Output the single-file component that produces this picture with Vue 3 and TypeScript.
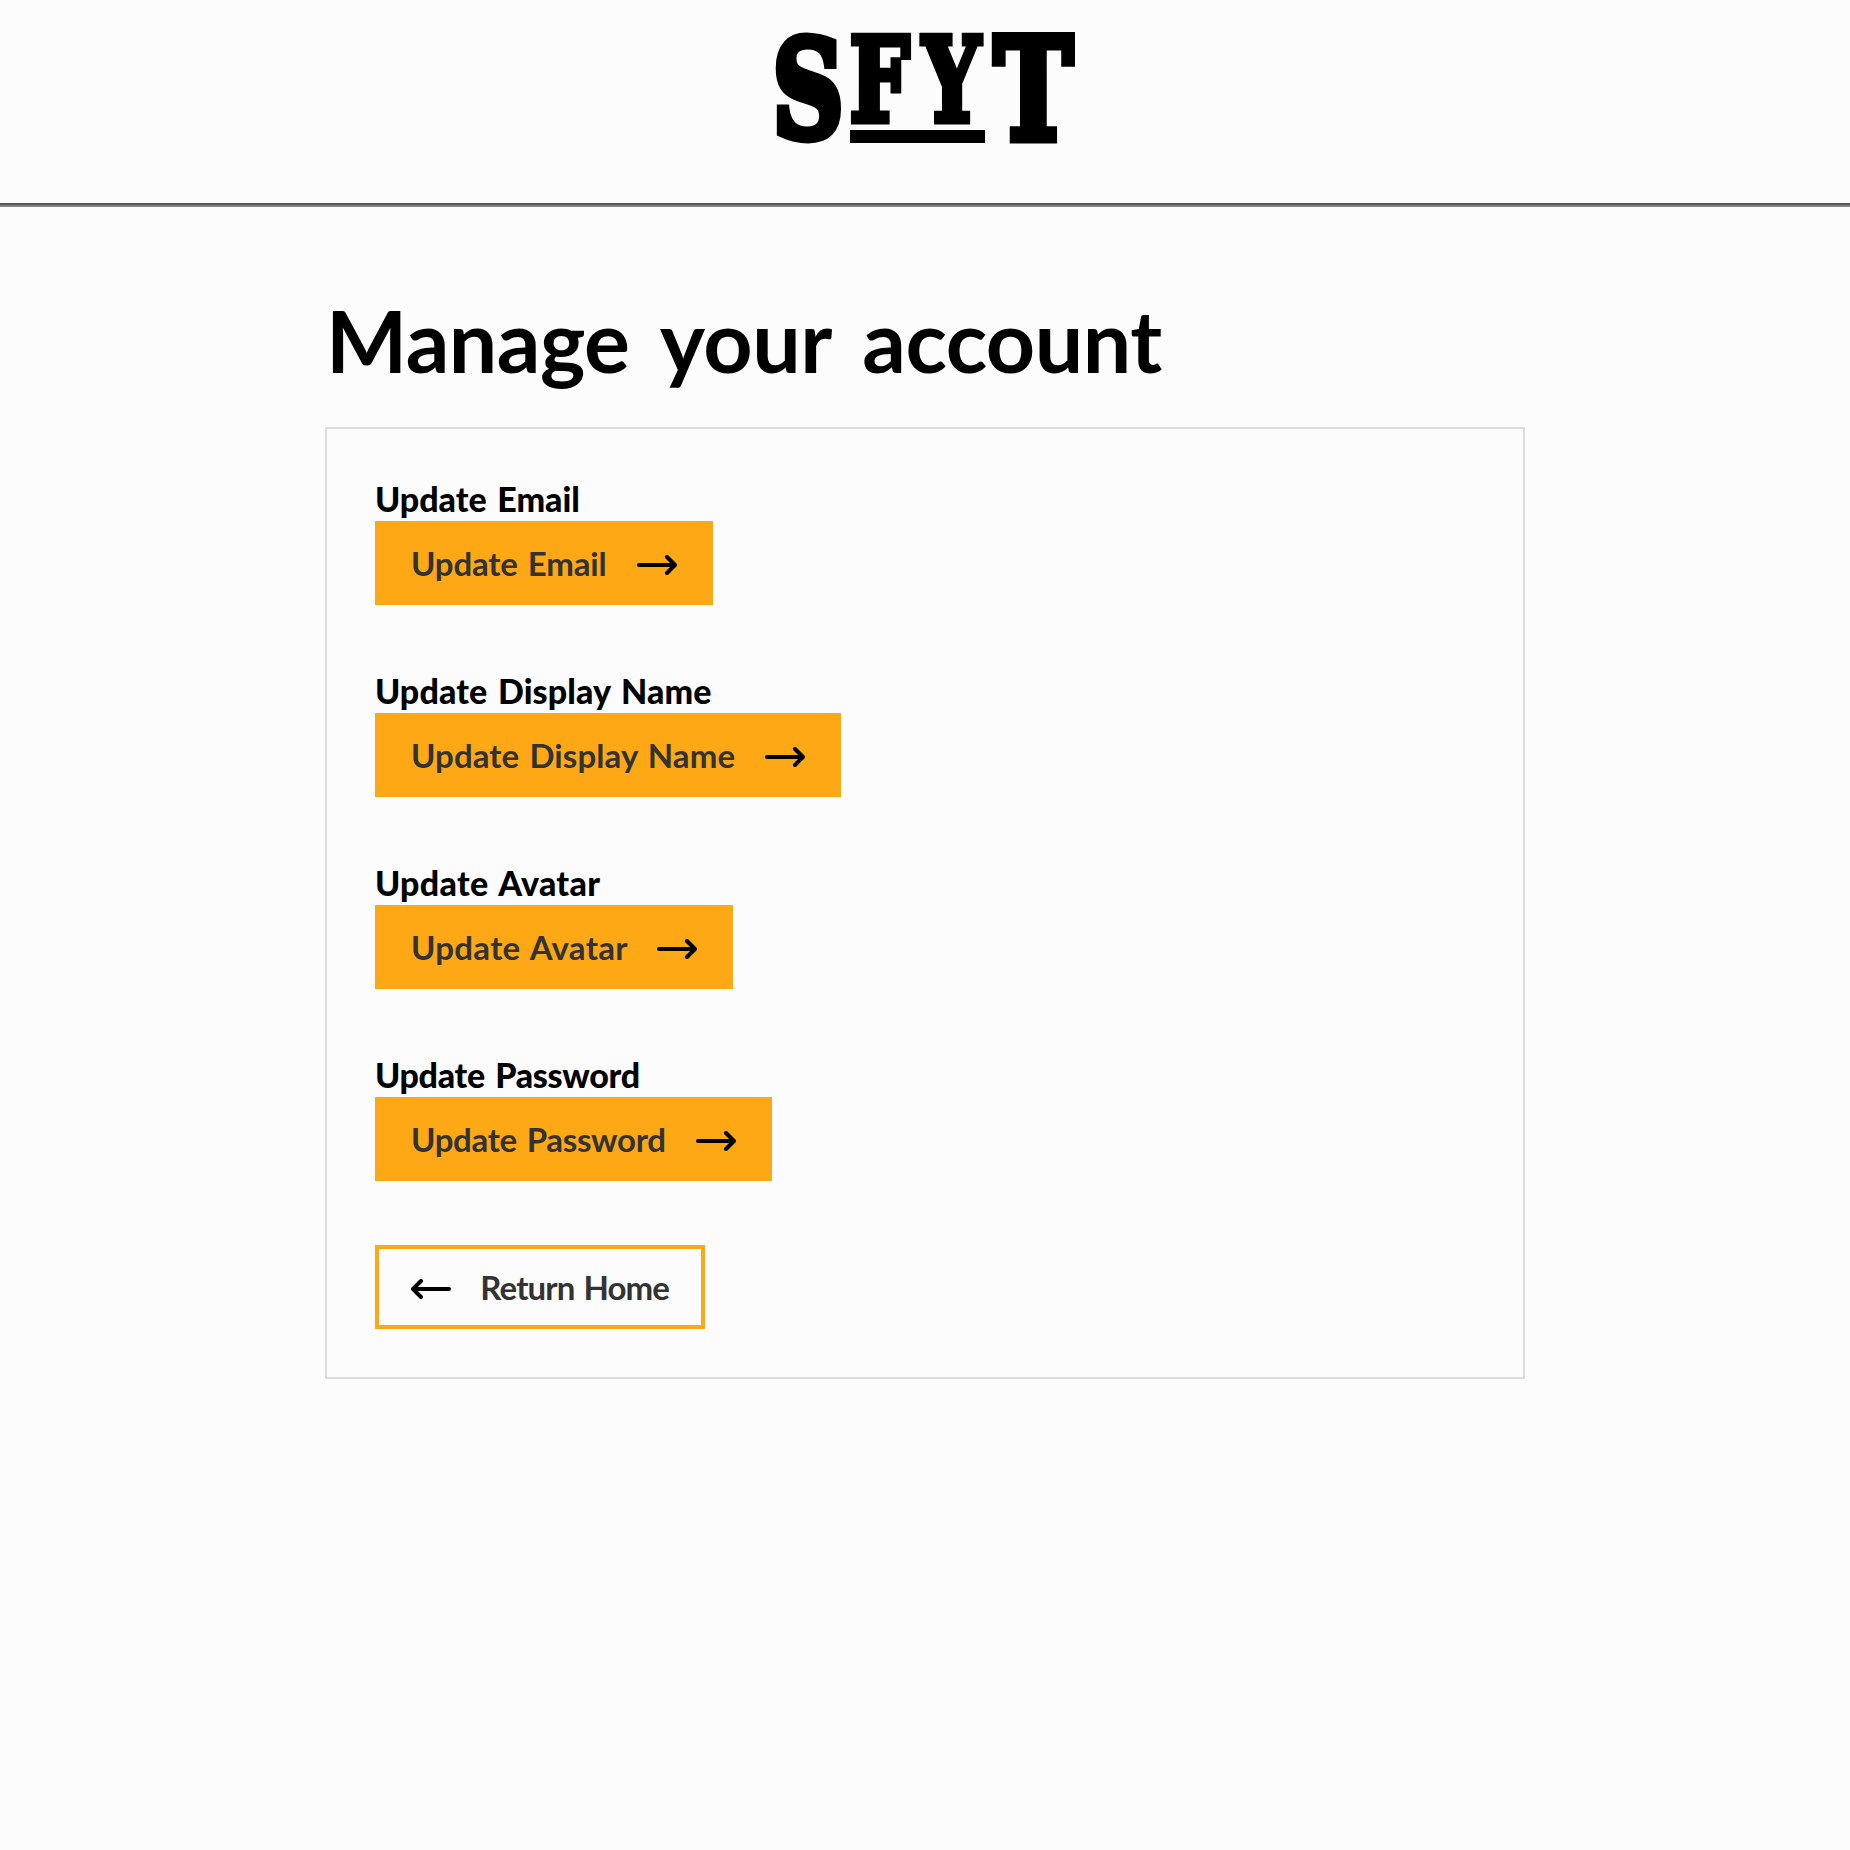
<script setup lang="ts">
interface AccountAction {
  id: string
  label: string
}

const actions: AccountAction[] = [
  { id: 'email', label: 'Update Email' },
  { id: 'name', label: 'Update Display Name' },
  { id: 'avatar', label: 'Update Avatar' },
  { id: 'password', label: 'Update Password' },
]
</script>

<template>
  <div class="page">
    <header class="header">
      <svg class="logo" viewBox="0 0 300 111" role="img" aria-label="SFYT">
        <g class="logo-letters">
          <text class="heavy" transform="translate(-2.5 105) scale(.73 1)" font-size="135">S</text>
          <text transform="translate(74.5 89) scale(.73 1)" font-size="116">F</text>
          <text transform="translate(147.5 89) scale(.7 1)" font-size="116">Y</text>
          <text class="heavy" transform="translate(219 106.5) scale(.755 1)" font-size="140">T</text>
        </g>
        <rect x="75" y="98" width="135" height="13" />
      </svg>
    </header>
    <main class="main">
      <h1 class="title">Manage your account</h1>
      <section class="card">
        <div v-for="action in actions" :key="action.id" class="group" :class="action.id">
          <h2 class="label">{{ action.label }}</h2>
          <a class="button">
            <span class="text">{{ action.label }}</span>
            <svg class="arrow" viewBox="0 0 40 20">
              <path d="M2 10H37M30 2L38 10L30 18" />
            </svg>
          </a>
        </div>
        <a class="button outline">
          <svg class="arrow" viewBox="0 0 40 20">
            <path d="M38 10H3M10 2L2 10L10 18" />
          </svg>
          <span class="text">Return Home</span>
        </a>
      </section>
    </main>
  </div>
</template>

<style>
body {
  margin: 0;
  background: #fcfcfc;
}
</style>

<style scoped>
.page {
  min-height: 1850px;
  background: #fcfcfc;
  color: #000;
  font-family: Lato, sans-serif;
}
.header {
  box-sizing: border-box;
  height: 207px;
  padding-top: 32px;
  display: flex;
  justify-content: center;
  align-items: flex-start;
  border-bottom: 2px solid #808280;
  box-shadow: inset 0 -2px 0 #555856;
}
.logo {
  width: 300px;
  height: 111px;
  overflow: visible;
}
.logo-letters {
  font-family: 'DejaVu Serif', serif;
  font-weight: 700;
  stroke: #000;
  stroke-width: 7;
}
.heavy {
  stroke-width: 9;
}
.main {
  width: 1200px;
  margin: 0 auto;
}
.title {
  margin: 0;
  padding: 81px 0 9px 1px;
  height: 130px;
  line-height: 104px;
  font-size: 86px;
  font-weight: 700;
  white-space: nowrap;
  letter-spacing: -0.5px;
  word-spacing: 12px;
}
.card {
  box-sizing: border-box;
  height: 952px;
  padding: 48px;
  border: 2px solid #ddd;
}
.group {
  margin-bottom: 64px;
}
.label {
  margin: 0;
  height: 44px;
  line-height: 44px;
  font-size: 34px;
  font-weight: 900;
  white-space: nowrap;
  word-spacing: 2.5px;
}
.button {
  box-sizing: border-box;
  width: 338px;
  height: 84px;
  padding: 0 36px;
  display: flex;
  align-items: center;
  justify-content: space-between;
  background: #ffa816;
  color: #333;
  font-size: 33px;
  font-weight: 700;
  white-space: nowrap;
}
.text {
  line-height: 42px;
  letter-spacing: -0.15px;
  word-spacing: 2px;
}
.name .label {
  letter-spacing: 0.1px;
}
.name .button {
  width: 466px;
}
.name .text {
  letter-spacing: 0.1px;
}
.avatar .label {
  letter-spacing: 0.3px;
}
.avatar .button {
  width: 358px;
}
.avatar .text {
  letter-spacing: 0.3px;
}
.password .label {
  letter-spacing: -0.3px;
}
.password .button {
  width: 397px;
}
.password .text {
  letter-spacing: -0.3px;
}
.outline {
  width: 330px;
  padding: 0 32px;
  border: 4px solid #ffa816;
  background: transparent;
}
.outline .text {
  letter-spacing: -0.9px;
}
.arrow {
  width: 40px;
  height: 20px;
  margin-top: 4px;
  flex: none;
  fill: none;
  stroke: #000;
  stroke-width: 4;
  stroke-linecap: round;
  stroke-linejoin: round;
}
</style>
